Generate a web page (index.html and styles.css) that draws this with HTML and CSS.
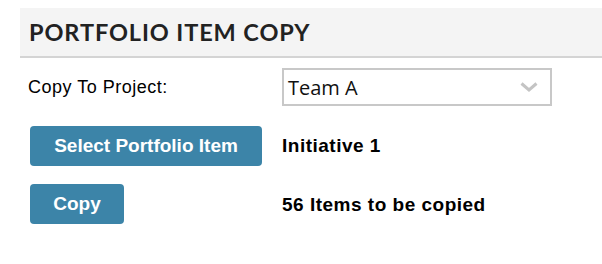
FILE: index.html
```html
<!DOCTYPE html>
<html lang="en">
  <head>
    <meta charset="UTF-8" />
    <title>Portfolio Item Copy</title>
    <link rel="stylesheet" href="styles.css">
  </head>
  <body>
    <div class="panel">
      <div class="panel-header">
        <h2>PORTFOLIO ITEM COPY</h2>
      </div>

      <!-- copy form -->
      <div class="form">
        <label class="label">Copy To Project:</label>
        <div class="select">
          <span class="select-value">Team A</span>
          <svg class="chevron" width="18" height="10" viewBox="0 0 18 10">
            <path d="M1.5 1.5 L9 8 L16.5 1.5" fill="none" stroke="#c4c4c4" stroke-width="3" />
          </svg>
        </div>

        <button class="btn btn-wide">Select Portfolio Item</button>
        <span class="value">Initiative 1</span>

        <button class="btn btn-small">Copy</button>
        <span class="value">56 Items to be copied</span>
      </div>
    </div>
  </body>
</html>
```

FILE: styles.css
```css
* {
  box-sizing: border-box;
}

body {
  margin: 0;
  background-color: white;
  font-family: "Liberation Sans", Arial, sans-serif;
  color: black;
}

.panel {
  padding-top: 8px;
}

.panel-header {
  margin-left: 20px;
  height: 50px;
  background-color: #f4f4f4;
  border-bottom: 2px solid #d4d4d4;
  display: flex;
  align-items: center;
  padding-left: 9px;
}

.panel-header h2 {
  margin: 0;
  font-family: Lato, sans-serif;
  font-weight: 700;
  font-size: 23.5px;
  letter-spacing: 0.9px;
  color: #222;
}

.form {
  display: grid;
  grid-template-columns: 254px 270px;
  row-gap: 20px;
  align-items: center;
  padding-left: 28px;
  margin-top: 10px;
}

.label {
  font-size: 18px;
  letter-spacing: 0.5px;
}

.select {
  height: 38px;
  border: 2px solid #c8c8c8;
  display: flex;
  align-items: center;
  justify-content: space-between;
  padding: 0 12px 0 4px;
}

.select-value {
  font-family: "Open Sans", sans-serif;
  font-size: 20px;
  color: #111;
}

.btn {
  margin-left: 2px;
  height: 40px;
  border: none;
  border-radius: 4px;
  background-color: #3c84a8;
  color: white;
  font-family: "Liberation Sans", Arial, sans-serif;
  font-weight: 700;
  font-size: 19px;
  justify-self: start;
}

.btn-wide {
  width: 232px;
}

.btn-small {
  width: 94px;
  margin-top: -2px;
}

.value {
  font-weight: 700;
  font-size: 19px;
  letter-spacing: 0.5px;
}
```
